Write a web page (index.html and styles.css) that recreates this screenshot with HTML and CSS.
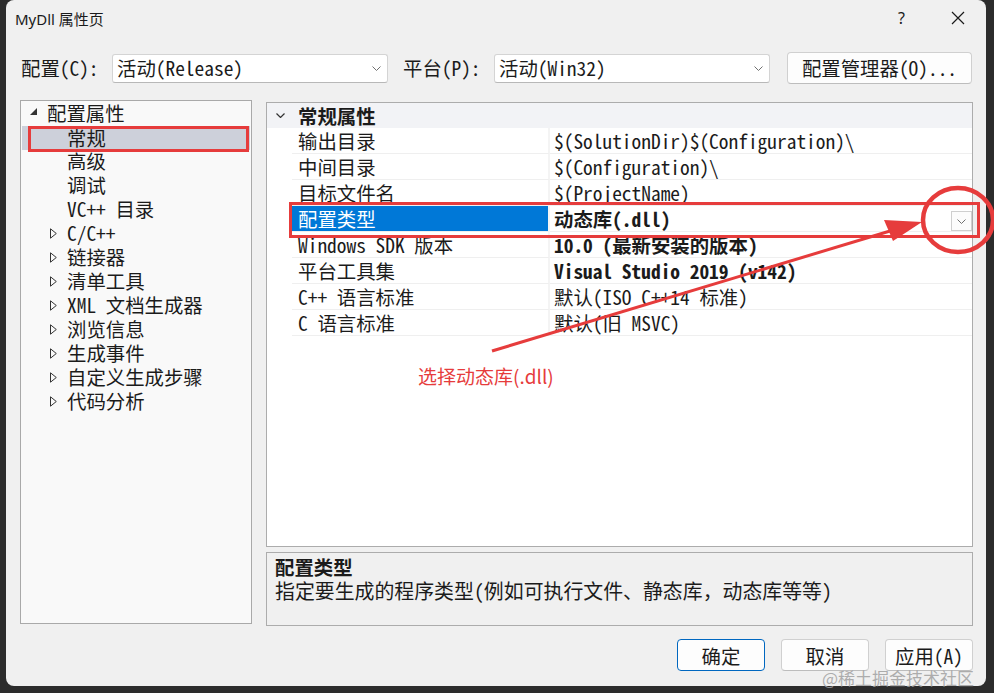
FILE: index.html
```html
<!DOCTYPE html>
<html lang="zh-CN">
<head>
<meta charset="utf-8">
<title>MyDll 属性页</title>
<link rel="stylesheet" href="styles.css">
</head>
<body>
<div class="dialog">
  <div class="titlebar">
    <span class="title">MyDll 属性页</span>
    <span class="help">?</span>
    <span class="close"><svg width="14" height="14" viewBox="0 0 14 14"><path d="M1 1L13 13M13 1L1 13" stroke="#1a1a1a" stroke-width="1.2" fill="none"/></svg></span>
  </div>

  <div class="config-row">
    <span class="label">配置(C):</span>
    <div class="combo combo-config"><span>活动(Release)</span><svg class="chev" width="9" height="5" viewBox="0 0 9 5"><path d="M0.5 0.5L4.5 4.5L8.5 0.5" stroke="#707070" fill="none"/></svg></div>
    <span class="label label-platform">平台(P):</span>
    <div class="combo combo-platform"><span>活动(Win32)</span><svg class="chev" width="9" height="5" viewBox="0 0 9 5"><path d="M0.5 0.5L4.5 4.5L8.5 0.5" stroke="#707070" fill="none"/></svg></div>
    <div class="btn btn-manager">配置管理器(O)...</div>
  </div>

  <div class="main">
    <div class="tree">
      <div class="node root"><span class="caret"><svg width="7" height="7" viewBox="0 0 7 7"><path d="M7 0L7 7L0 7Z" fill="#333"/></svg></span>配置属性</div>
      <div class="node leaf selected">常规</div>
      <div class="node leaf">高级</div>
      <div class="node leaf">调试</div>
      <div class="node leaf">VC++ 目录</div>
      <div class="node branch"><span class="caret"><svg width="7" height="11" viewBox="0 0 7 11"><path d="M0.5 0.8L6.3 5.5L0.5 10.2Z" stroke="#333" fill="none"/></svg></span>C/C++</div>
      <div class="node branch"><span class="caret"><svg width="7" height="11" viewBox="0 0 7 11"><path d="M0.5 0.8L6.3 5.5L0.5 10.2Z" stroke="#333" fill="none"/></svg></span>链接器</div>
      <div class="node branch"><span class="caret"><svg width="7" height="11" viewBox="0 0 7 11"><path d="M0.5 0.8L6.3 5.5L0.5 10.2Z" stroke="#333" fill="none"/></svg></span>清单工具</div>
      <div class="node branch"><span class="caret"><svg width="7" height="11" viewBox="0 0 7 11"><path d="M0.5 0.8L6.3 5.5L0.5 10.2Z" stroke="#333" fill="none"/></svg></span>XML 文档生成器</div>
      <div class="node branch"><span class="caret"><svg width="7" height="11" viewBox="0 0 7 11"><path d="M0.5 0.8L6.3 5.5L0.5 10.2Z" stroke="#333" fill="none"/></svg></span>浏览信息</div>
      <div class="node branch"><span class="caret"><svg width="7" height="11" viewBox="0 0 7 11"><path d="M0.5 0.8L6.3 5.5L0.5 10.2Z" stroke="#333" fill="none"/></svg></span>生成事件</div>
      <div class="node branch"><span class="caret"><svg width="7" height="11" viewBox="0 0 7 11"><path d="M0.5 0.8L6.3 5.5L0.5 10.2Z" stroke="#333" fill="none"/></svg></span>自定义生成步骤</div>
      <div class="node branch"><span class="caret"><svg width="7" height="11" viewBox="0 0 7 11"><path d="M0.5 0.8L6.3 5.5L0.5 10.2Z" stroke="#333" fill="none"/></svg></span>代码分析</div>
    </div>

    <div class="right">
      <div class="grid">
        <div class="grid-header">
          <span class="strip"><svg width="9" height="5" viewBox="0 0 9 5"><path d="M0.5 0.5L4.5 4.5L8.5 0.5" stroke="#333" stroke-width="1.2" fill="none"/></svg></span>
          <span class="group-title">常规属性</span>
        </div>
        <div class="row"><span class="strip"></span><span class="name">输出目录</span><span class="value">$(SolutionDir)$(Configuration)\</span></div>
        <div class="row"><span class="strip"></span><span class="name">中间目录</span><span class="value">$(Configuration)\</span></div>
        <div class="row"><span class="strip"></span><span class="name">目标文件名</span><span class="value">$(ProjectName)</span></div>
        <div class="row"><span class="strip"></span><span class="name name-selected">配置类型</span><span class="value bold">动态库(.dll)<span class="dropbtn"><svg width="9" height="5" viewBox="0 0 9 5"><path d="M0.5 0.5L4.5 4.5L8.5 0.5" stroke="#707070" fill="none"/></svg></span></span></div>
        <div class="row"><span class="strip"></span><span class="name">Windows SDK 版本</span><span class="value bold">10.0 (最新安装的版本)</span></div>
        <div class="row"><span class="strip"></span><span class="name">平台工具集</span><span class="value bold">Visual Studio 2019 (v142)</span></div>
        <div class="row"><span class="strip"></span><span class="name">C++ 语言标准</span><span class="value">默认(ISO C++14 标准)</span></div>
        <div class="row"><span class="strip"></span><span class="name">C 语言标准</span><span class="value">默认(旧 MSVC)</span></div>
      </div>
      <div class="desc">
        <div class="desc-title">配置类型</div>
        <div class="desc-text">指定要生成的程序类型(例如可执行文件、静态库，动态库等等)</div>
      </div>
    </div>
  </div>

  <div class="buttons">
    <div class="btn btn-action btn-default">确定</div>
    <div class="btn btn-action">取消</div>
    <div class="btn btn-action">应用(A)</div>
  </div>
</div>

<svg class="annotations" width="994" height="693" viewBox="0 0 994 693">
  <rect x="29.5" y="127.5" width="218" height="23" fill="none" stroke="#e63c3c" stroke-width="3"/>
  <rect x="290.5" y="203.5" width="688" height="33" fill="none" stroke="#e63c3c" stroke-width="3"/>
  <ellipse cx="958" cy="220" rx="35" ry="32" fill="none" stroke="#e63c3c" stroke-width="4.5"/>
  <line x1="492" y1="351" x2="890" y2="231" stroke="#e63c3c" stroke-width="3"/>
  <path d="M922 222L884 220L893 241Z" fill="#e63c3c"/>
</svg>
<div class="callout">选择动态库(.dll)</div>
<div class="watermark">@稀土掘金技术社区</div>
</body>
</html>
```

FILE: styles.css
```css
html, body {
  margin: 0;
  padding: 0;
}
body {
  width: 994px;
  height: 693px;
  background: #2c2c2c;
  overflow: hidden;
  position: relative;
  font-family: "Noto Sans Mono CJK SC", "Noto Sans CJK SC", monospace;
  font-size: 19.4px;
  color: #1b1b1b;
}
.dialog {
  margin-left: 6px;
  width: 980px;
  height: 686px;
  background: #f0f0f0;
  border-radius: 8px;
  display: flex;
  flex-direction: column;
}
.titlebar {
  height: 36px;
  display: flex;
  align-items: center;
  padding-left: 9px;
  font-family: "Noto Sans", "Noto Sans CJK SC", sans-serif;
  font-size: 15px;
  color: #1a1a1a;
}
.title {
  flex: 1;
}
.help {
  width: 14px;
  margin-right: 39px;
  font-size: 16px;
}
.close {
  width: 14px;
  height: 14px;
  margin-right: 21px;
  display: flex;
}
.config-row {
  margin-top: 16px;
  height: 32px;
  display: flex;
  align-items: center;
  padding-left: 15px;
  line-height: 26px;
}
.label {
  width: 78px;
  margin-right: 13px;
}
.label-platform {
  margin-left: 15px;
}
.combo {
  width: 276px;
  height: 29px;
  box-sizing: border-box;
  background: #fff;
  border: 1px solid #d4d4d4;
  border-bottom-color: #b8b8b8;
  border-radius: 3px;
  display: flex;
  align-items: center;
  justify-content: space-between;
  padding: 0 6px 0 4px;
}
.combo .chev {
  margin-top: 1px;
}
.btn {
  box-sizing: border-box;
  background: #fdfdfd;
  border: 1px solid #d0d0d0;
  border-bottom-color: #bdbdbd;
  border-radius: 4px;
  display: flex;
  align-items: center;
  justify-content: center;
}
.btn-manager {
  margin-left: 17px;
  width: 185px;
  height: 32px;
}
.main {
  margin-top: 16px;
  height: 526px;
  display: flex;
  padding-left: 14px;
}
.tree {
  width: 232px;
  height: 524px;
  box-sizing: border-box;
  border: 1px solid #a9a9a9;
  background: #f9f9f9;
  padding-top: 0;
}
.node {
  height: 24px;
  line-height: 24px;
  display: flex;
  align-items: center;
  margin: 0 1px;
  white-space: pre;
}
.caret {
  width: 17px;
  display: flex;
  align-items: center;
}
.root {
  padding-left: 8px;
}
.root .caret {
  padding-bottom: 3px;
  box-sizing: border-box;
}
.leaf {
  padding-left: 45px;
}
.branch {
  padding-left: 28px;
}
.selected {
  margin-top: 1px;
  margin-bottom: -1px;
  background: #cdd0da;
}
.right {
  margin-left: 14px;
  width: 707px;
  display: flex;
  flex-direction: column;
}
.grid {
  margin-top: 2px;
  height: 445px;
  box-sizing: border-box;
  border: 1px solid #acacac;
  background: #fff;
}
.grid-header {
  height: 25px;
  background: #f2f3f6;
  display: flex;
  align-items: center;
  font-weight: bold;
}
.strip {
  width: 25px;
  flex: none;
  display: flex;
  justify-content: center;
  padding-left: 2px;
  box-sizing: border-box;
}
.group-title {
  padding-left: 6px;
}
.row {
  height: 26px;
  display: flex;
  line-height: 25px;
  white-space: pre;
}
.name {
  width: 258px;
  flex: none;
  box-sizing: border-box;
  padding-left: 6px;
  border-bottom: 1px solid #efefef;
  border-right: 2px solid #f4f4f4;
}
.name-selected {
  background: #0078d7;
  color: #fff;
}
.value {
  flex: 1;
  padding-left: 4px;
  border-bottom: 1px solid #efefef;
  display: flex;
  justify-content: space-between;
}
.bold {
  font-weight: bold;
}
.dropbtn {
  width: 21px;
  height: 20px;
  margin-top: 5px;
  box-sizing: border-box;
  border: 1px solid #cfcfcf;
  background: #fcfcfc;
  display: flex;
  align-items: center;
  justify-content: center;
}
.desc {
  margin-top: 5px;
  height: 74px;
  box-sizing: border-box;
  border: 1px solid #acacac;
  padding: 2px 0 0 8px;
  line-height: 24px;
}
.desc-title {
  font-weight: bold;
}
.desc-text {
  font-size: 19.9px;
}
.buttons {
  margin-top: 13px;
  display: flex;
  justify-content: flex-end;
  gap: 16px;
  padding-right: 13px;
}
.btn-action {
  width: 88px;
  height: 32px;
}
.btn-default {
  border: 1px solid #0067c0;
}
.annotations {
  position: absolute;
  left: 0;
  top: 0;
  pointer-events: none;
}
.callout {
  position: absolute;
  left: 418px;
  top: 362px;
  font-family: "Noto Sans CJK SC", sans-serif;
  font-size: 19px;
  line-height: 28px;
  color: #e63c3c;
}
.watermark {
  position: absolute;
  left: 822px;
  top: 666px;
  font-family: "Noto Sans CJK SC", sans-serif;
  font-size: 17px;
  line-height: 24px;
  color: rgba(160, 160, 160, 0.85);
}
```
